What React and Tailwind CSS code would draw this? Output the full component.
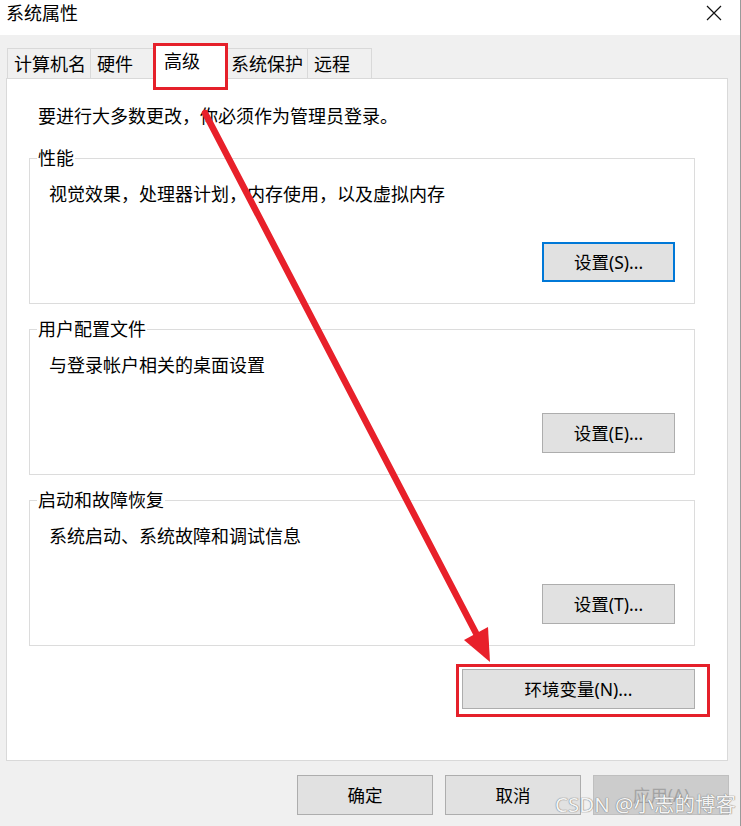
import React from "react";

const font = { fontFamily: '"Noto Sans", "Noto Sans CJK SC", sans-serif' };

function Btn({ children, className = "", primary = false, disabled = false }) {
  return (
    <div
      className={
        "flex items-center justify-center h-[40px] text-[17.5px] leading-[22px] " +
        (disabled
          ? "bg-[#cccccc] border border-[#bfbfbf] text-[#a3a3a3] "
          : primary
          ? "bg-[#e1e1e1] border-2 border-[#0078d7] text-black "
          : "bg-[#e1e1e1] border border-[#adadad] text-black ") +
        className
      }
    >
      {children}
    </div>
  );
}

function Group({ title, desc, btn, primary, className = "" }) {
  return (
    <fieldset className={"w-[666px] border border-[#dcdcdc] pl-[7px] pr-[19px] pb-[21px] " + className}>
      <legend className="px-px text-[18px] leading-[22px] text-black">{title}</legend>
      <div className="mt-[14px] pl-[12px] text-[18px] leading-[22px] text-black">{desc}</div>
      <div className="flex justify-end mt-[37px]">
        <Btn primary={primary} className="w-[133px]">{btn}</Btn>
      </div>
    </fieldset>
  );
}

export default function App() {
  const tabs = [
    { t: "计算机名", w: "w-[84px]", pl: "pl-[6px]" },
    { t: "硬件", w: "w-[64px]", pl: "pl-[6px]" },
    { t: "高级", w: "w-[75px]", pl: "pl-[10px]", sel: true },
    { t: "系统保护", w: "w-[81px]", pl: "pl-[3px]" },
    { t: "远程", w: "w-[65px]", pl: "pl-[6px]" },
  ];
  return (
    <div style={font} className="relative w-[741px] h-[826px] bg-[#f0f0f0] border-r border-[#9a9a9a] overflow-hidden select-none">
      {/* title bar */}
      <div className="h-[35px] bg-white flex items-center justify-between pl-[6px] pr-[18px]">
        <span className="text-[18px] leading-[22px] text-black -mt-[9px]">系统属性</span>
        <svg width="16" height="16" viewBox="0 0 16 16" className="-mt-[10px]">
          <path d="M1 1 L15 15 M15 1 L1 15" stroke="#111" strokeWidth="1.2" fill="none" />
        </svg>
      </div>

      {/* tabs */}
      <div className="h-[43px] flex items-end pl-[7px]">
        {tabs.map((tab, i) =>
          tab.sel ? (
            <div
              key={i}
              className={"relative z-10 -ml-px -mb-px h-[36px] bg-white border-l border-t border-r border-[#d9d9d9] flex items-center text-[18px] leading-[22px] text-black pb-[2px] " + tab.w + " " + tab.pl}
            >
              {tab.t}
            </div>
          ) : (
            <div
              key={i}
              className={(i === 0 ? "" : "-ml-px ") + "h-[30px] bg-[#f0f0f0] border-l border-t border-r border-[#d9d9d9] flex items-center text-[18px] leading-[22px] text-black " + tab.w + " " + tab.pl}
            >
              {tab.t}
            </div>
          )
        )}
      </div>

      {/* panel */}
      <div className="ml-[6px] w-[722px] h-[683px] bg-white border border-[#d9d9d9] pt-[26px] pl-[22px]">
        <div className="pl-[9px] text-[18px] leading-[22px] text-black">要进行大多数更改，你必须作为管理员登录。</div>
        <Group className="mt-[20px]" title="性能" desc="视觉效果，处理器计划，内存使用，以及虚拟内存" btn="设置(S)..." primary />
        <Group className="mt-[14px]" title="用户配置文件" desc="与登录帐户相关的桌面设置" btn="设置(E)..." />
        <Group className="mt-[14px]" title="启动和故障恢复" desc="系统启动、系统故障和调试信息" btn="设置(T)..." />
        <div className="w-[666px] flex justify-end mt-[23px]">
          <Btn className="w-[233px]">环境变量(N)...</Btn>
        </div>
      </div>

      {/* bottom buttons */}
      <div className="flex justify-end gap-[12px] pr-[11px] mt-[14px]">
        <Btn className="w-[136px]">确定</Btn>
        <Btn className="w-[136px]">取消</Btn>
        <Btn disabled className="w-[136px]">应用(A)</Btn>
      </div>

      {/* annotations */}
      <div className="absolute z-20 left-[153px] top-[43px] w-[75px] h-[47px] border-[3px] border-[#e5202a] pointer-events-none" />
      <div className="absolute z-20 left-[456px] top-[664px] w-[254px] h-[53px] border-[3px] border-[#e5202a] pointer-events-none" />
      <svg className="absolute z-20 left-0 top-0 pointer-events-none" width="741" height="826" viewBox="0 0 741 826">
        <line x1="205" y1="113" x2="478" y2="637" stroke="#e8202a" strokeWidth="6.5" strokeLinecap="round" />
        <polygon points="490,662 464,640 488,627" fill="#e8202a" />
      </svg>

      {/* watermark */}
      <div className="absolute z-30 left-[555px] top-[791px] text-[20.5px] leading-[26px] text-[#f4f4f4] [text-shadow:0_0_1px_#777,0_0_1px_#777] pointer-events-none whitespace-nowrap">
        CSDN @小志的博客
      </div>
    </div>
  );
}
